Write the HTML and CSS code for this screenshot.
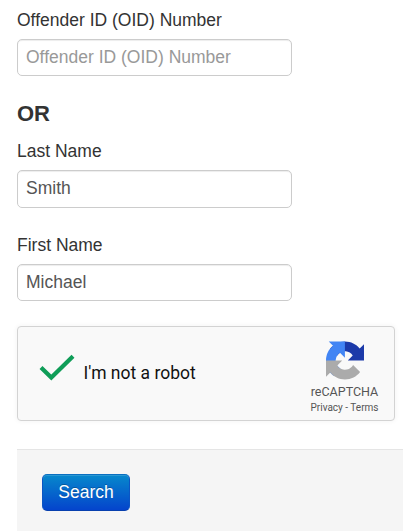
FILE: index.html
```html
<!DOCTYPE html>
<html lang="en">
<head>
<meta charset="utf-8">
<title>Offender Search</title>
<link rel="stylesheet" href="styles.css">
</head>
<body>
<form class="search-form">
  <div class="field">
    <label for="oid">Offender ID (OID) Number</label>
    <input id="oid" type="text" placeholder="Offender ID (OID) Number">
  </div>
  <h4 class="divider">OR</h4>
  <div class="field field-last">
    <label for="last">Last Name</label>
    <input id="last" type="text" value="Smith">
  </div>
  <div class="field field-first">
    <label for="first">First Name</label>
    <input id="first" type="text" value="Michael">
  </div>
  <div class="captcha">
    <svg class="check" viewBox="0 0 36 28"><path d="M2 13.5 12.3 23.5 34 2.2" fill="none" stroke="#0f9d58" stroke-width="4.2"/></svg>
    <span class="captcha-text">I'm not a robot</span>
    <div class="brand">
      <svg class="logo" viewBox="0 0 64 64">
        <path fill="#1c3aa9" d="M64 31.955l-.033-1.37V4.687l-7.16 7.16C50.948 4.674 42.033.093 32.05.093c-10.4 0-19.622 4.96-25.458 12.64l11.736 11.86a15.55 15.55 0 0 1 4.754-5.334c2.05-1.6 4.952-2.906 8.968-2.906.485 0 .86.057 1.135.163 4.976.393 9.288 3.14 11.828 7.124l-8.307 8.307L64 31.953"/>
        <path fill="#4285f4" d="M31.862.094l-1.37.033H4.594l7.16 7.16C4.58 13.147 0 22.06 0 32.046c0 10.4 4.96 19.622 12.64 25.458L24.5 45.768a15.55 15.55 0 0 1-5.334-4.754c-1.6-2.05-2.906-4.952-2.906-8.968 0-.485.057-.86.163-1.135.393-4.976 3.14-9.288 7.124-11.828l8.307 8.307L31.86.095"/>
        <path fill="#ababab" d="M.001 32.045l.033 1.37v25.898l7.16-7.16c5.86 7.173 14.774 11.754 24.76 11.754 10.4 0 19.622-4.96 25.458-12.64l-11.736-11.86a15.55 15.55 0 0 1-4.754 5.334c-2.05 1.6-4.952 2.906-8.968 2.906-.485 0-.86-.057-1.135-.163-4.976-.393-9.288-3.14-11.828-7.124l8.307-8.307c-10.522.04-22.4.066-27.295-.005"/>
      </svg>
      <div class="brand-name">reCAPTCHA</div>
      <div class="brand-links">Privacy - Terms</div>
    </div>
  </div>
  <div class="actions"><button class="btn" type="button">Search</button></div>
</form>
</body>
</html>
```
FILE: styles.css
```css
* { box-sizing: border-box; }
body {
  margin: 0;
  background: #fff;
  color: #333;
  font: 17.5px/25px "Liberation Sans", Arial, sans-serif;
  overflow: hidden;
}
.search-form { padding: 8px 0 0 17px; }
.field label { display: block; margin-bottom: 6px; }
.field input {
  display: block;
  width: 275px;
  height: 37px;
  padding: 0 8px;
  border: 1px solid #ccc;
  border-radius: 5px;
  background: #fff;
  box-shadow: inset 0 1px 1px rgba(0, 0, 0, .075);
  color: #555;
  font: inherit;
}
.field input::placeholder { color: #999; opacity: 1; }
.divider { margin: 25px 0 13px; font-size: 22px; line-height: 25px; }
.field-last input { height: 38px; padding-bottom: 2px; }
.field-first { margin-top: 25px; }
.captcha {
  display: flex;
  width: 378px;
  height: 95px;
  margin-top: 25px;
  border: 1px solid #d3d3d3;
  border-radius: 4px;
  background: #f9f9f9;
  box-shadow: 0 0 4px 1px rgba(0, 0, 0, .04);
  font-family: Roboto, sans-serif;
}
.check { width: 36px; height: 28px; margin: 27px 0 0 21px; }
.captcha-text { margin: 34px 0 0 8.5px; color: #111; font-size: 17.5px; }
.brand { width: 90px; margin: 14px 4.5px 0 auto; color: #555; text-align: center; }
.logo { display: block; width: 38px; height: 39px; margin: 0 auto; }
.brand-name { margin-top: 4px; font-size: 12.5px; line-height: 16px; }
.brand-links { margin-top: 1px; font-size: 10px; line-height: 14px; }
.actions {
  height: 82px;
  margin-top: 28px;
  padding: 24px 25px;
  border-top: 1px solid #e5e5e5;
  background: #f5f5f5;
}
.btn {
  display: block;
  width: 88px;
  height: 37px;
  padding: 0 0 1px;
  border: 1px solid;
  border-color: #0a6fc0 #0b55c4 #073fae;
  border-radius: 5px;
  background: linear-gradient(#0788cc, #0444cc);
  box-shadow: inset 0 1px 0 rgba(255, 255, 255, .15);
  color: #fff;
  font: inherit;
  text-shadow: 0 -1px 0 rgba(0, 0, 0, .25);
}
```
